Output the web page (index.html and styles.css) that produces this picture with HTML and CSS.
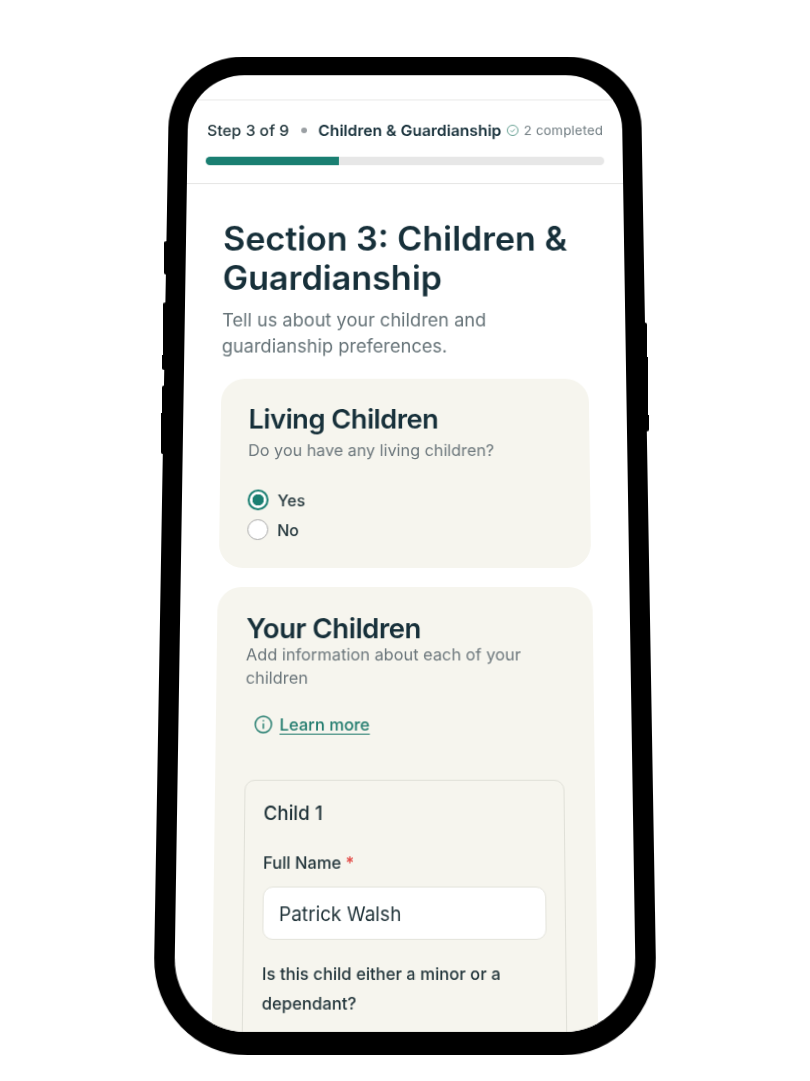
FILE: index.html
```html
<!DOCTYPE html>
<html lang="en">
<head>
<meta charset="utf-8">
<title>Section 3: Children &amp; Guardianship</title>
<link rel="stylesheet" href="styles.css">
</head>
<body>
<div class="phone">
  <span class="nub nub-a"></span>
  <span class="nub nub-b"></span>
  <span class="nub nub-c"></span>
  <span class="nub nub-d"></span>
  <div class="screen">
    <header class="progress">
      <div class="progress-row">
        <span class="step">Step 3 of 9</span>
        <span class="dot"></span>
        <span class="step-name">Children &amp; Guardianship</span>
        <span class="done">
          <svg class="done-icon" viewBox="0 0 16 16" fill="none"><circle cx="8" cy="8" r="6.3"/><path d="M5.4 8.2l1.8 1.8 3.4-3.6"/></svg>
          2 completed
        </span>
      </div>
      <div class="bar"><div class="bar-fill"></div></div>
    </header>
    <main class="content">
      <h1 class="title">Section 3: Children &amp; Guardianship</h1>
      <p class="lead">Tell us about your children and guardianship preferences.</p>
      <section class="card card-living">
        <h2 class="card-title">Living Children</h2>
        <p class="card-sub card-sub-gap">Do you have any living children?</p>
        <div class="radios">
          <div class="radio-row"><span class="radio radio-on"></span>Yes</div>
          <div class="radio-row"><span class="radio"></span>No</div>
        </div>
      </section>
      <section class="card card-kids">
        <h2 class="card-title">Your Children</h2>
        <p class="card-sub card-sub-wrap">Add information about each of your children</p>
        <div class="learn">
          <svg class="learn-icon" viewBox="0 0 20 20" fill="none"><circle cx="10" cy="10" r="8"/><path d="M10 9.4v4.4M10 6.3v.3"/></svg>
          <a class="learn-link" href="#">Learn more</a>
        </div>
        <div class="child">
          <h3 class="child-title">Child 1</h3>
          <div class="label">Full Name <span class="req">*</span></div>
          <div class="input">Patrick Walsh</div>
          <div class="question">Is this child either a minor or a dependant?</div>
        </div>
      </section>
    </main>
  </div>
</div>
</body>
</html>
```
FILE: styles.css
```css
* { box-sizing: border-box; }
html, body { margin: 0; padding: 0; background: #fff; }
body { width: 810px; height: 1081px; overflow: hidden; font-family: Inter, "Liberation Sans", sans-serif; color: #17303a; padding-top: 37px; }
.phone { position: relative; width: 488px; height: 1003px; margin: 0 auto; border: solid #000; border-width: 20px 20px 22px; border-radius: 76px 76px 92px 92px; background: #000; transform-origin: 50% 523px; transform: perspective(1000px) rotateX(4deg); }
.nub { position: absolute; background: #000; width: 4px; border-radius: 2px 0 0 2px; }
.nub-a { left: -22px; top: 176px; height: 35px; }
.nub-b { left: -22px; top: 240px; height: 70px; }
.nub-c { left: -22px; top: 326px; height: 70px; }
.nub-d { right: -22px; top: 261px; height: 112px; border-radius: 0 2px 2px 0; }
.screen { height: 961px; background: #fff; border-radius: 58px 58px 70px 70px; overflow: hidden; padding-top: 26px; }
.progress { height: 90px; border-top: 1px solid #e8e8e6; border-bottom: 1px solid #e4e4e2; padding: 22px 19px 0; }
.progress-row { display: flex; align-items: center; height: 20px; margin-left: 1px; font-size: 16.2px; white-space: nowrap; }
.step { font-weight: 500; color: #22363c; }
.dot { width: 6px; height: 6px; border-radius: 50%; background: #9a9fa3; margin: 0 12px; }
.step-name { font-weight: 600; color: #17303a; }
.done { display: flex; align-items: center; gap: 4px; margin-left: 5px; font-size: 13.5px; color: #6f7b80; letter-spacing: .2px; }
.done-icon { width: 14px; height: 14px; stroke: #5d9a8c; stroke-width: 1.1; }
.bar { height: 9px; margin-top: 18px; background: #e7e7e7; border-radius: 5px; overflow: hidden; }
.bar-fill { width: 33.3%; height: 100%; background: #1a7f72; }
.content { padding: 0 37px; }
.title { margin: 37px 0 0 1px; font-size: 34.8px; line-height: 41px; font-weight: 600; color: #17303a; }
.lead { margin: 10px 0 0 1px; font-size: 18.5px; line-height: 27px; color: #667378; }
.card { background: #f6f5ee; border-radius: 24px; }
.card-living { height: 192px; margin: 20px 1px 0; padding: 24px 28px; }
.card-kids { margin-top: 19px; padding: 24px 29px; height: 600px; }
.card-title { margin: 0; font-size: 27.5px; line-height: 34px; font-weight: 600; letter-spacing: -.5px; color: #17303a; }
.card-sub { margin: 0; font-size: 16.3px; line-height: 23px; color: #6b767b; }
.card-sub-gap { margin-top: 4px; }
.card-sub-wrap { margin-top: -2px; }
.radios { margin-top: 28px; display: flex; flex-direction: column; gap: 9px; }
.radio-row { display: flex; align-items: center; gap: 9px; font-size: 16px; font-weight: 500; color: #1f3238; height: 21px; }
.radio { width: 21px; height: 21px; border-radius: 50%; border: 1.5px solid #aaa; background: #fff; }
.radio-on { border: 2px solid #1a7f72; background: radial-gradient(circle, #1a7f72 0 5.5px, #fff 6px); }
.learn { display: flex; align-items: center; gap: 6px; margin: 24px 0 0 8px; }
.learn-icon { width: 20px; height: 20px; stroke: #1f7a6c; stroke-width: 1.4; stroke-linecap: round; }
.learn-link { font-size: 16.4px; font-weight: 500; color: #1f7a6c; text-decoration: underline; text-underline-offset: 3px; }
.child { margin: 44px 0 0; width: 315px; border: 1px solid #e0e0d8; border-radius: 10px; padding: 19px 18px; height: 400px; }
.child-title { margin: 0; font-size: 18.5px; line-height: 24px; font-weight: 500; color: #1f3238; }
.label { margin-top: 25px; font-size: 16.2px; line-height: 22px; font-weight: 500; color: #1f3238; }
.req { color: #e2433f; }
.input { margin-top: 12px; height: 51px; background: #fff; border: 1px solid #e4e4dc; border-radius: 10px; padding: 0 15px; display: flex; align-items: center; font-size: 18.6px; color: #1f3238; }
.question { margin-top: 18px; font-size: 16.2px; line-height: 28px; font-weight: 500; color: #1f3238; }
```
